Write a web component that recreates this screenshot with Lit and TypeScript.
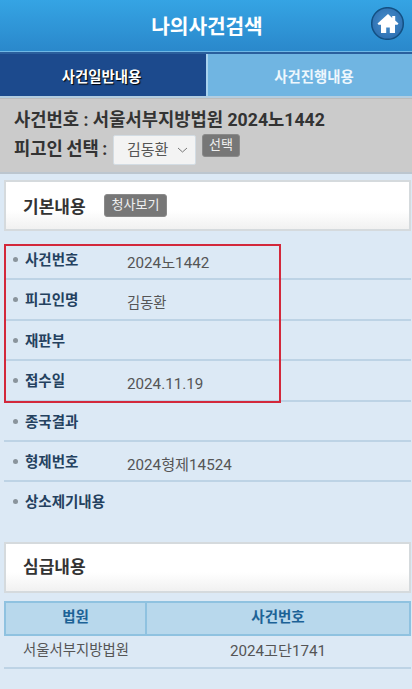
import { LitElement, html, css } from "lit";
import { customElement } from "lit/decorators.js";

const rows: [string, string, boolean][] = [
  ["사건번호", "2024노1442", true],
  ["피고인명", "김동환", false],
  ["재판부", "", false],
  ["접수일", "2024.11.19", true],
  ["종국결과", "", false],
  ["형제번호", "2024형제14524", true],
  ["상소제기내용", "", false],
];

@customElement("app-root")
export class AppRoot extends LitElement {
  static styles = css`
    :host {
      display: block;
      position: relative;
      width: 412px;
      height: 689px;
      overflow: hidden;
      background: #dce9f5;
      font-family: Roboto, "Noto Sans CJK KR", sans-serif;
      color: #555;
    }
    .header {
      height: 52px;
      box-sizing: border-box;
      background: linear-gradient(#35a4e4, #2a88cb);
      border-bottom: 1px solid #6fb8e6;
      display: flex;
      align-items: center;
      justify-content: center;
      position: relative;
    }
    .header h1 {
      margin: 0 0 1px 2px;
      font-size: 20.3px;
      font-weight: 700;
      color: #fff;
      letter-spacing: -0.1px;
    }
    .home {
      position: absolute;
      right: 7px;
      top: 7px;
      width: 35px;
      height: 33px;
    }
    .tabs {
      display: flex;
      height: 46px;
      border-top: 2px solid #2a5f9d;
      box-sizing: border-box;
      border-bottom: 2px solid #b3cde0;
    }
    .tab {
      display: flex;
      align-items: center;
      justify-content: center;
      font-size: 14.4px;
      font-weight: 700;
      box-sizing: border-box;
    }
    .tab.on {
      width: 206px;
      padding-right: 3px;
      background: #1c4a8d;
      color: #fff;
      text-shadow: 1px 1px 1px #000;
    }
    .tab.off {
      flex: 1;
      padding-left: 8px;
      background: #70b5e2;
      color: #eef7fd;
      border-left: 2px solid #a8d2ee;
    }
    .case {
      height: 76px;
      box-sizing: border-box;
      background: #cbcbcb;
      border-top: 1px solid #bbb;
      border-bottom: 2px solid #bcc6cf;
      padding: 10px 14px 0;
      color: #333;
      font-size: 17.7px;
      font-weight: 700;
      line-height: 22px;
    }
    .pick {
      display: flex;
      align-items: flex-start;
      margin-top: 4px;
    }
    .pick .lbl {
      margin-top: 3px;
      width: 99px;
      word-spacing: -1px;
    }
    .select {
      width: 83px;
      height: 30px;
      box-sizing: border-box;
      background: #f3f3f3;
      border: 1px solid #d3dce3;
      border-radius: 2px;
      display: flex;
      align-items: center;
      justify-content: space-between;
      padding: 0 7px 0 13px;
      font-size: 15px;
      font-weight: 400;
      color: #555;
    }
    .btn {
      background: #777;
      color: #f0f0f0;
      border: 1px solid #8a8a8a;
      border-radius: 3px;
      font-weight: 400;
      font-size: 13px;
      line-height: 16px;
    }
    .pick .btn {
      margin: -1px 0 0 6px;
      padding: 2px 6px 3px;
    }
    .title {
      margin: 6px 1px 0 4px;
      box-sizing: border-box;
      background: linear-gradient(#fff 60%, #f1f1f1);
      border: 2px solid #d5dadd;
      height: 51px;
      display: flex;
      align-items: center;
      padding-left: 17px;
      color: #333;
      font-size: 17px;
      font-weight: 700;
    }
    .title .btn {
      margin-left: 18px;
      padding: 2px 7px 3px;
    }
    .rows {
      margin: 9px 1px 0 4px;
    }
    .row {
      height: 40.4px;
      box-sizing: border-box;
      border-bottom: 2px solid #bdd3e5;
      display: flex;
      position: relative;
      padding: 11px 0 0 9px;
      font-size: 14.5px;
    }
    .row:last-child {
      border-bottom: none;
    }
    .dot {
      width: 5px;
      height: 5px;
      border-radius: 50%;
      background: #8a949c;
      margin-top: 6px;
    }
    .key {
      margin-left: 7px;
      width: 102px;
      font-weight: 700;
      color: #24415f;
      line-height: 20px;
    }
    .val {
      color: #555;
      line-height: 20px;
      margin-top: 2px;
      font-size: 14.3px;
    }
    .val.num {
      font-size: 15.2px;
    }
    .sp {
      margin-top: 19px;
      padding-bottom: 3px;
    }
    .table {
      margin: 8px 1px 0 4px;
    }
    .thead {
      display: grid;
      grid-template-columns: 139px 1fr;
      height: 35px;
      box-sizing: border-box;
      background: #b8d8ec;
      border: 2px solid #8fc2e0;
      color: #1c6296;
      font-size: 14.5px;
      font-weight: 700;
      text-align: center;
      line-height: 29px;
    }
    .thead div + div {
      border-left: 2px solid #8fc2e0;
    }
    .tbody {
      display: grid;
      grid-template-columns: 141px 1fr;
      height: 31px;
      border-bottom: 2px solid #bdd3e5;
      font-size: 14.4px;
      line-height: 30px;
      color: #555;
    }
    .tbody div:first-child {
      padding-left: 19px;
    }
    .tbody div:last-child {
      text-align: center;
      font-size: 15.2px;
    }
    .mark {
      position: absolute;
      left: 4px;
      top: 244px;
      width: 277px;
      height: 159px;
      box-sizing: border-box;
      border: 2px solid #d3283b;
      pointer-events: none;
    }
  `;

  render() {
    return html`
      <div class="header">
        <h1>나의사건검색</h1>
        <svg class="home" viewBox="0 0 35 33">
          <defs>
            <radialGradient id="homeFill" cx="0.5" cy="0.45" r="0.6">
              <stop offset="0" stop-color="#4a90cc" />
              <stop offset="1" stop-color="#2a6db0" />
            </radialGradient>
          </defs>
          <circle cx="17.5" cy="16.5" r="15.8" fill="url(#homeFill)" stroke="#135083" stroke-width="1.5" />
          <path d="M18 7 7.5 16.6l1 1.2H11V26h5.2v-5.5h3.6V26H25v-8.2h2.5l1-1.2-3.3-3V9h-3v1.9z" fill="#fff" />
        </svg>
      </div>
      <div class="tabs">
        <div class="tab on">사건일반내용</div>
        <div class="tab off">사건진행내용</div>
      </div>
      <div class="case">
        <div>사건번호 : 서울서부지방법원 2024노1442</div>
        <div class="pick">
          <span class="lbl">피고인 선택 :</span>
          <div class="select">
            김동환
            <svg width="11" height="6" viewBox="0 0 11 6">
              <path d="M1 1l4.5 4L10 1" fill="none" stroke="#777" stroke-width="1" />
            </svg>
          </div>
          <span class="btn">선택</span>
        </div>
      </div>
      <div class="title">기본내용<span class="btn">청사보기</span></div>
      <div class="rows">
        ${rows.map(
          ([k, v, num]) => html`
            <div class="row">
              <span class="dot"></span>
              <span class="key">${k}</span>
              <span class="val ${num ? "num" : ""}">${v}</span>
            </div>
          `
        )}
      </div>
      <div class="title sp">심급내용</div>
      <div class="table">
        <div class="thead"><div>법원</div><div>사건번호</div></div>
        <div class="tbody"><div>서울서부지방법원</div><div>2024고단1741</div></div>
      </div>
      <div class="mark"></div>
    `;
  }
}
